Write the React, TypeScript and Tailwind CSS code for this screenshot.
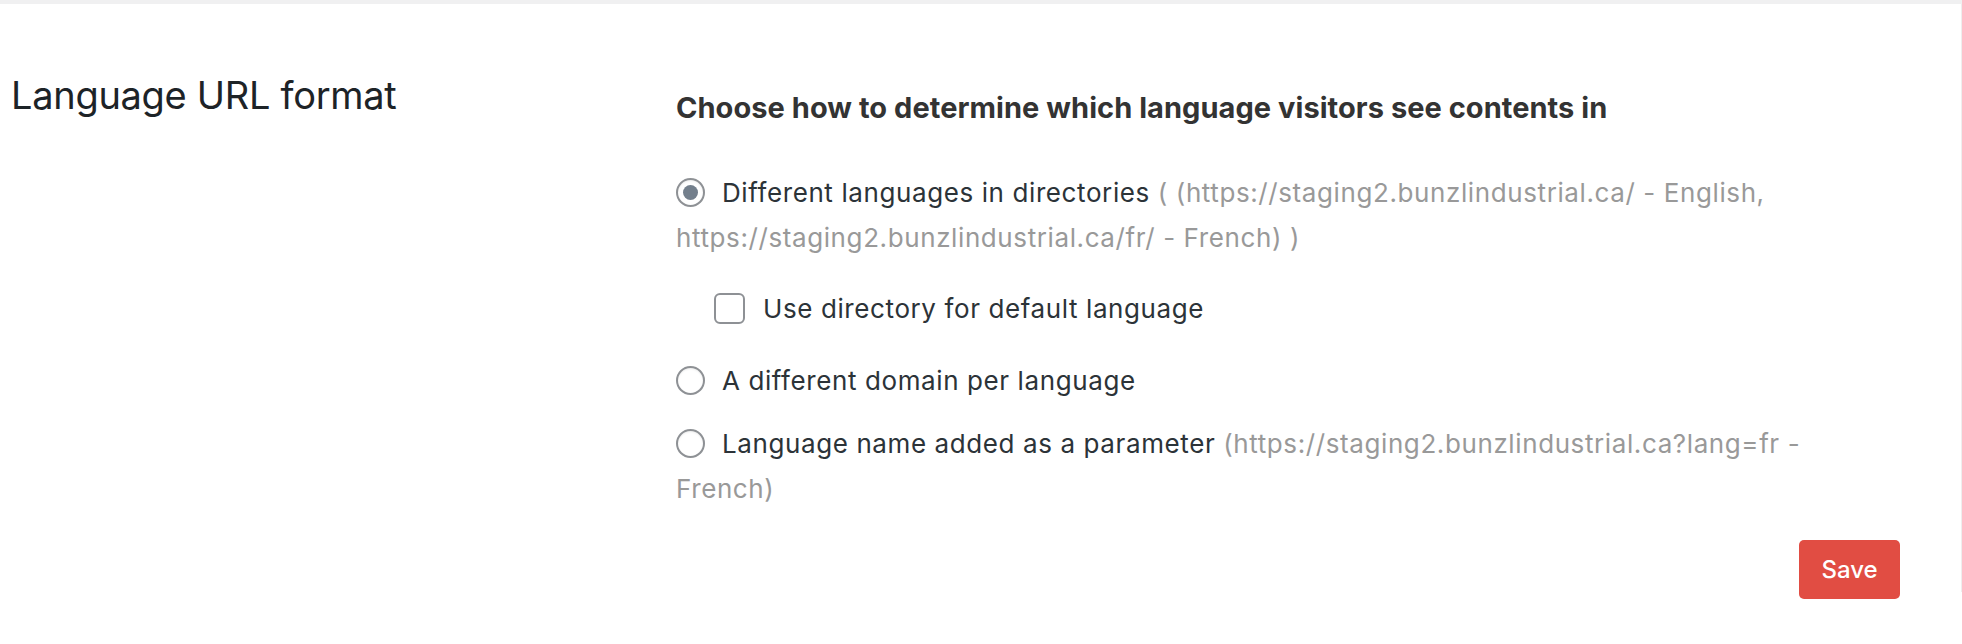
import React from "react";

const font = { fontFamily: "Inter, 'Noto Sans', sans-serif" };

function Radio({ checked }: { checked?: boolean }) {
  return (
    <span className="relative top-[-2px] mr-[17px] inline-flex h-[29px] w-[29px] items-center justify-center rounded-full border-2 border-[#8e9195] bg-white align-middle shadow-[inset_0_1px_2px_rgba(0,0,0,0.08)]">
      {checked && <span className="block h-[15px] w-[15px] rounded-full bg-[#737f8c]" />}
    </span>
  );
}

export default function App() {
  return (
    <div className="min-h-[644px] w-[1962px] bg-white text-[#2c3338]" style={font}>
      <div className="h-[4px] w-full bg-[#f0f0f1]" />
      <div className="flex h-[588px] border-r border-[#eeeeee]">
        <div className="w-[676px] shrink-0 pl-[11px] pt-[69px]">
          <h2 className="text-[38px] font-normal leading-[44px] tracking-[-0.3px] text-[#1d2327]">
            Language URL format
          </h2>
        </div>
        <div className="flex-1 pr-[61px]">
          <div className="w-[1160px]">
            <h3 className="pt-[84px] text-[29px] font-bold leading-[40px] tracking-[0.05px] text-[#333333]">
              Choose how to determine which language visitors see contents in
            </h3>
            <p className="mt-[42px] text-[26px] leading-[45px] tracking-[0.6px]">
              <Radio checked />
              Different languages in directories{" "}
              <span className="text-[#999999]">
                ( (https://staging2.bunzlindustrial.ca/ - English, https://staging2.bunzlindustrial.ca/fr/ - French) )
              </span>
            </p>
            <p className="mt-[26px] flex items-center pl-[38px] text-[26px] leading-[45px] tracking-[0.6px]">
              <span className="mr-[18px] inline-block h-[31px] w-[31px] shrink-0 rounded-[6px] border-2 border-[#8e9195] bg-white" />
              Use directory for default language
            </p>
            <p className="mt-[27px] text-[26px] leading-[45px] tracking-[0.6px]">
              <Radio />
              A different domain per language
            </p>
            <p className="mt-[18px] text-[26px] leading-[45px] tracking-[0.6px]">
              <Radio />
              Language name added as a parameter{" "}
              <span className="text-[#999999]">(https://staging2.bunzlindustrial.ca?lang=fr - French)</span>
            </p>
          </div>
          <div className="mt-[29px] flex justify-end">
            <button className="h-[59px] w-[101px] rounded-[5px] bg-[#e14d43] text-[24px] font-medium text-white">
              Save
            </button>
          </div>
        </div>
      </div>
    </div>
  );
}
